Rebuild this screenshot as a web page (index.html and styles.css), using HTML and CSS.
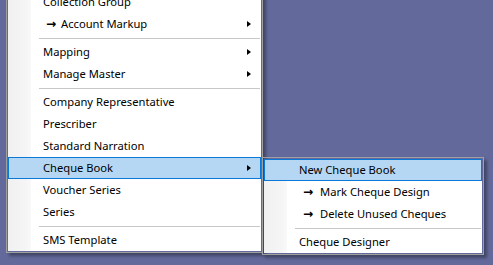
FILE: index.html
```html
<!DOCTYPE html>
<html lang="en">
<head>
  <meta charset="UTF-8" />
  <title>Masters Menu</title>
  <link rel="stylesheet" href="styles.css">
</head>
<body>
  <div class="desktop">
    <div class="menu menu-main" role="menu">
      <div class="item">Collection Group</div>
      <div class="item sub"><span class="go">→</span>Account Markup</div>
      <div class="sep"></div>
      <div class="item sub">Mapping</div>
      <div class="item sub">Manage Master</div>
      <div class="sep"></div>
      <div class="item">Company Representative</div>
      <div class="item">Prescriber</div>
      <div class="item">Standard Narration</div>
      <div class="item sub active">Cheque Book</div>
      <div class="item">Voucher Series</div>
      <div class="item">Series</div>
      <div class="sep"></div>
      <div class="item">SMS Template</div>
    </div>

    <div class="menu menu-sub" role="menu">
      <div class="item active">New Cheque Book</div>
      <div class="item"><span class="go">→</span>Mark Cheque Design</div>
      <div class="item"><span class="go">→</span>Delete Unused Cheques</div>
      <div class="sep"></div>
      <div class="item">Cheque Designer</div>
    </div>
  </div>
</body>
</html>
```

FILE: styles.css
```css
:root {
  --desk: #636a9b;
  --menu-border: #a0a0a0;
  --hl-fill: #b6d7f3;
  --hl-border: #0a78d7;
  --sep: #c8c8c8;
  --font: 'Noto Sans', 'Open Sans', sans-serif;
}

html, body {
  margin: 0;
  height: 100%;
}

body {
  background-color: var(--desk);
  font-family: var(--font);
  font-size: 11.2px;
  color: #000;
  overflow: hidden;
}

.desktop {
  position: relative;
  width: 493px;
  height: 265px;
}

/* popup menus float over the desktop */
.menu {
  position: absolute;
  box-sizing: border-box;
  border: 1px solid var(--menu-border);
  padding: 1px;
  background: linear-gradient(to right, #f0f0f0 0, #f5f5f5 18px, #f9f9f9 24px, #fff 24px, #fff 100%);
  background-clip: content-box;
  box-shadow: 3px 3px 3px rgba(0, 0, 0, 0.35);
  display: flex;
  flex-direction: column;
}

.menu-main {
  left: 6px;
  top: -11px;
  width: 257px;
}

.menu-sub {
  left: 262px;
  top: 157px;
  width: 222px;
}

.item {
  position: relative;
  box-sizing: border-box;
  height: 22px;
  line-height: 22px;
  padding-left: 34px;
  border: 1px solid transparent;
  white-space: nowrap;
  display: flex;
  align-items: center;
}

.item.active {
  background-color: var(--hl-fill);
  border-color: var(--hl-border);
}

.item .go {
  display: inline-block;
  width: 10px;
  margin: 0 5px 0 3px;
  font-family: 'DejaVu Sans', sans-serif;
  font-weight: bold;
  font-size: 12px;
}

.menu-sub .item .go {
  margin: 0 7px 0 4px;
}

.item.sub::after {
  content: '';
  position: absolute;
  right: 9px;
  top: 7px;
  border-left: 4px solid #000;
  border-top: 3.5px solid transparent;
  border-bottom: 3.5px solid transparent;
}

.sep {
  height: 6px;
  display: flex;
  align-items: center;
  padding-left: 31px;
}

.sep::before {
  content: '';
  flex: 1;
  height: 1px;
  background-color: var(--sep);
  margin-right: 1px;
}
```
